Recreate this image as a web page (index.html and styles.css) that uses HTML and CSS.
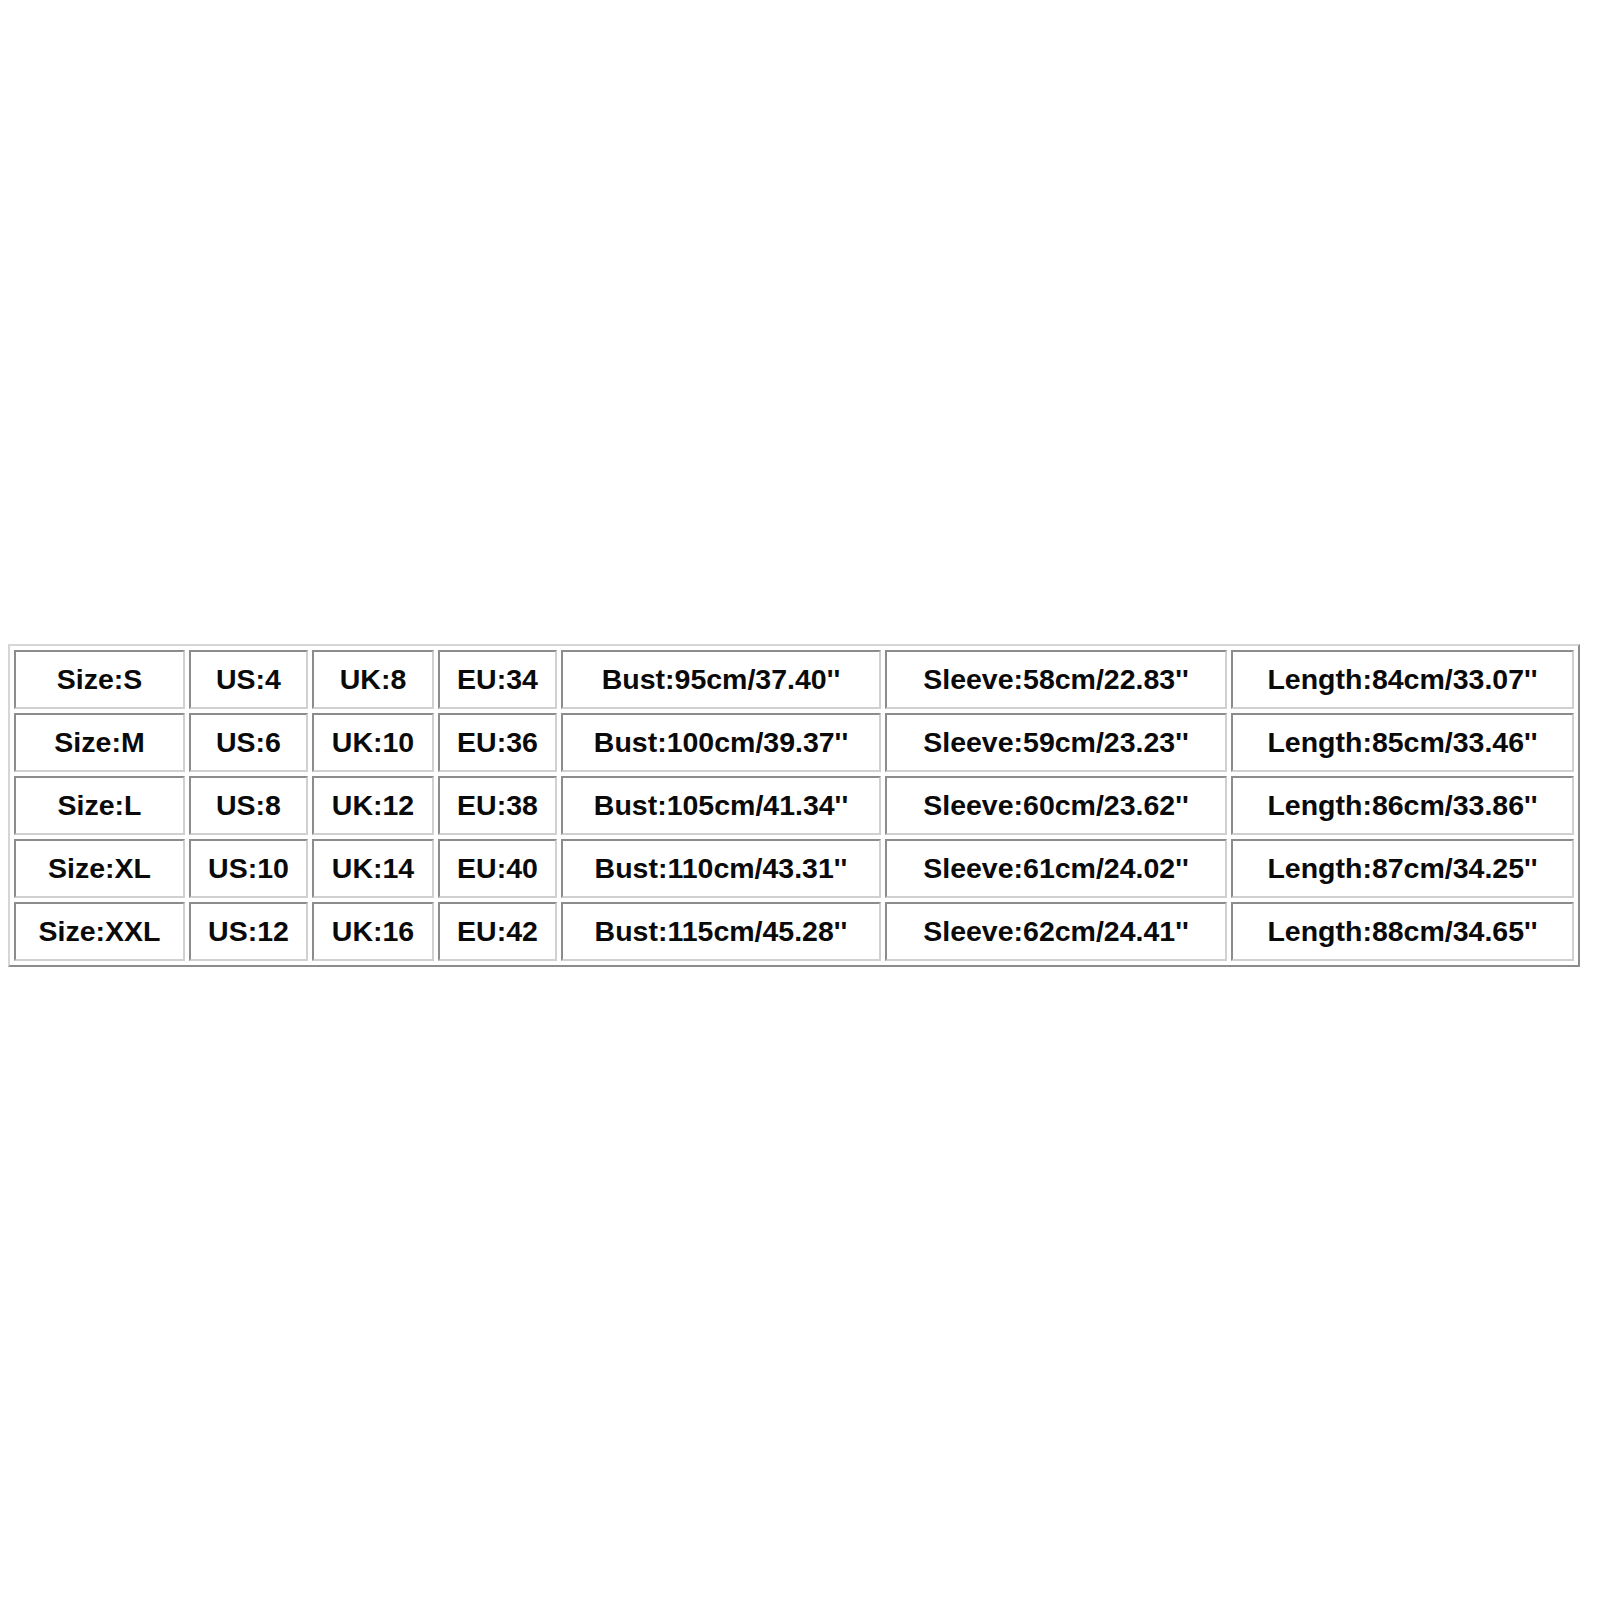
FILE: index.html
```html
<!DOCTYPE html>
<html>
<head>
<meta charset="utf-8">
<link rel="stylesheet" href="styles.css">
</head>
<body>
<div class="page">
<table class="sizes">
<tr>
<td class="c1">Size:S</td><td class="c2">US:4</td><td class="c3">UK:8</td><td class="c4">EU:34</td><td class="c5">Bust:95cm/37.40''</td><td class="c6">Sleeve:58cm/22.83''</td><td class="c7">Length:84cm/33.07''</td>
</tr>
<tr>
<td>Size:M</td><td>US:6</td><td>UK:10</td><td>EU:36</td><td>Bust:100cm/39.37''</td><td>Sleeve:59cm/23.23''</td><td>Length:85cm/33.46''</td>
</tr>
<tr>
<td>Size:L</td><td>US:8</td><td>UK:12</td><td>EU:38</td><td>Bust:105cm/41.34''</td><td>Sleeve:60cm/23.62''</td><td>Length:86cm/33.86''</td>
</tr>
<tr>
<td>Size:XL</td><td>US:10</td><td>UK:14</td><td>EU:40</td><td>Bust:110cm/43.31''</td><td>Sleeve:61cm/24.02''</td><td>Length:87cm/34.25''</td>
</tr>
<tr>
<td>Size:XXL</td><td>US:12</td><td>UK:16</td><td>EU:42</td><td>Bust:115cm/45.28''</td><td>Sleeve:62cm/24.41''</td><td>Length:88cm/34.65''</td>
</tr>
</table>
</div>
</body>
</html>
```
FILE: styles.css
```css
html, body {
  margin: 0;
  padding: 0;
  background: #ffffff;
}
.page {
  padding: 644px 0 0 8px;
  height: 1600px;
  box-sizing: border-box;
}
.sizes {
  table-layout: fixed;
  width: 1572px;
  border-collapse: separate;
  border-spacing: 4px;
  border-style: solid;
  border-width: 2px;
  border-color: #d6d6d6 #8c8c8c #8c8c8c #d6d6d6;
  font-family: "Liberation Sans", Arial, sans-serif;
  font-weight: bold;
  font-size: 28.5px;
  color: #0a0a0a;
}
.sizes td {
  box-sizing: border-box;
  height: 59px;
  padding: 0;
  text-align: center;
  vertical-align: middle;
  border-style: solid;
  border-width: 2px;
  border-color: #8c8c8c #d0d0d0 #d0d0d0 #8c8c8c;
  white-space: nowrap;
}
.sizes td.c1 { width: 171px; }
.sizes td.c2 { width: 119px; }
.sizes td.c3 { width: 122px; }
.sizes td.c4 { width: 119px; }
.sizes td.c5 { width: 320px; }
.sizes td.c6 { width: 342px; }
.sizes td.c7 { width: 343px; }
```
